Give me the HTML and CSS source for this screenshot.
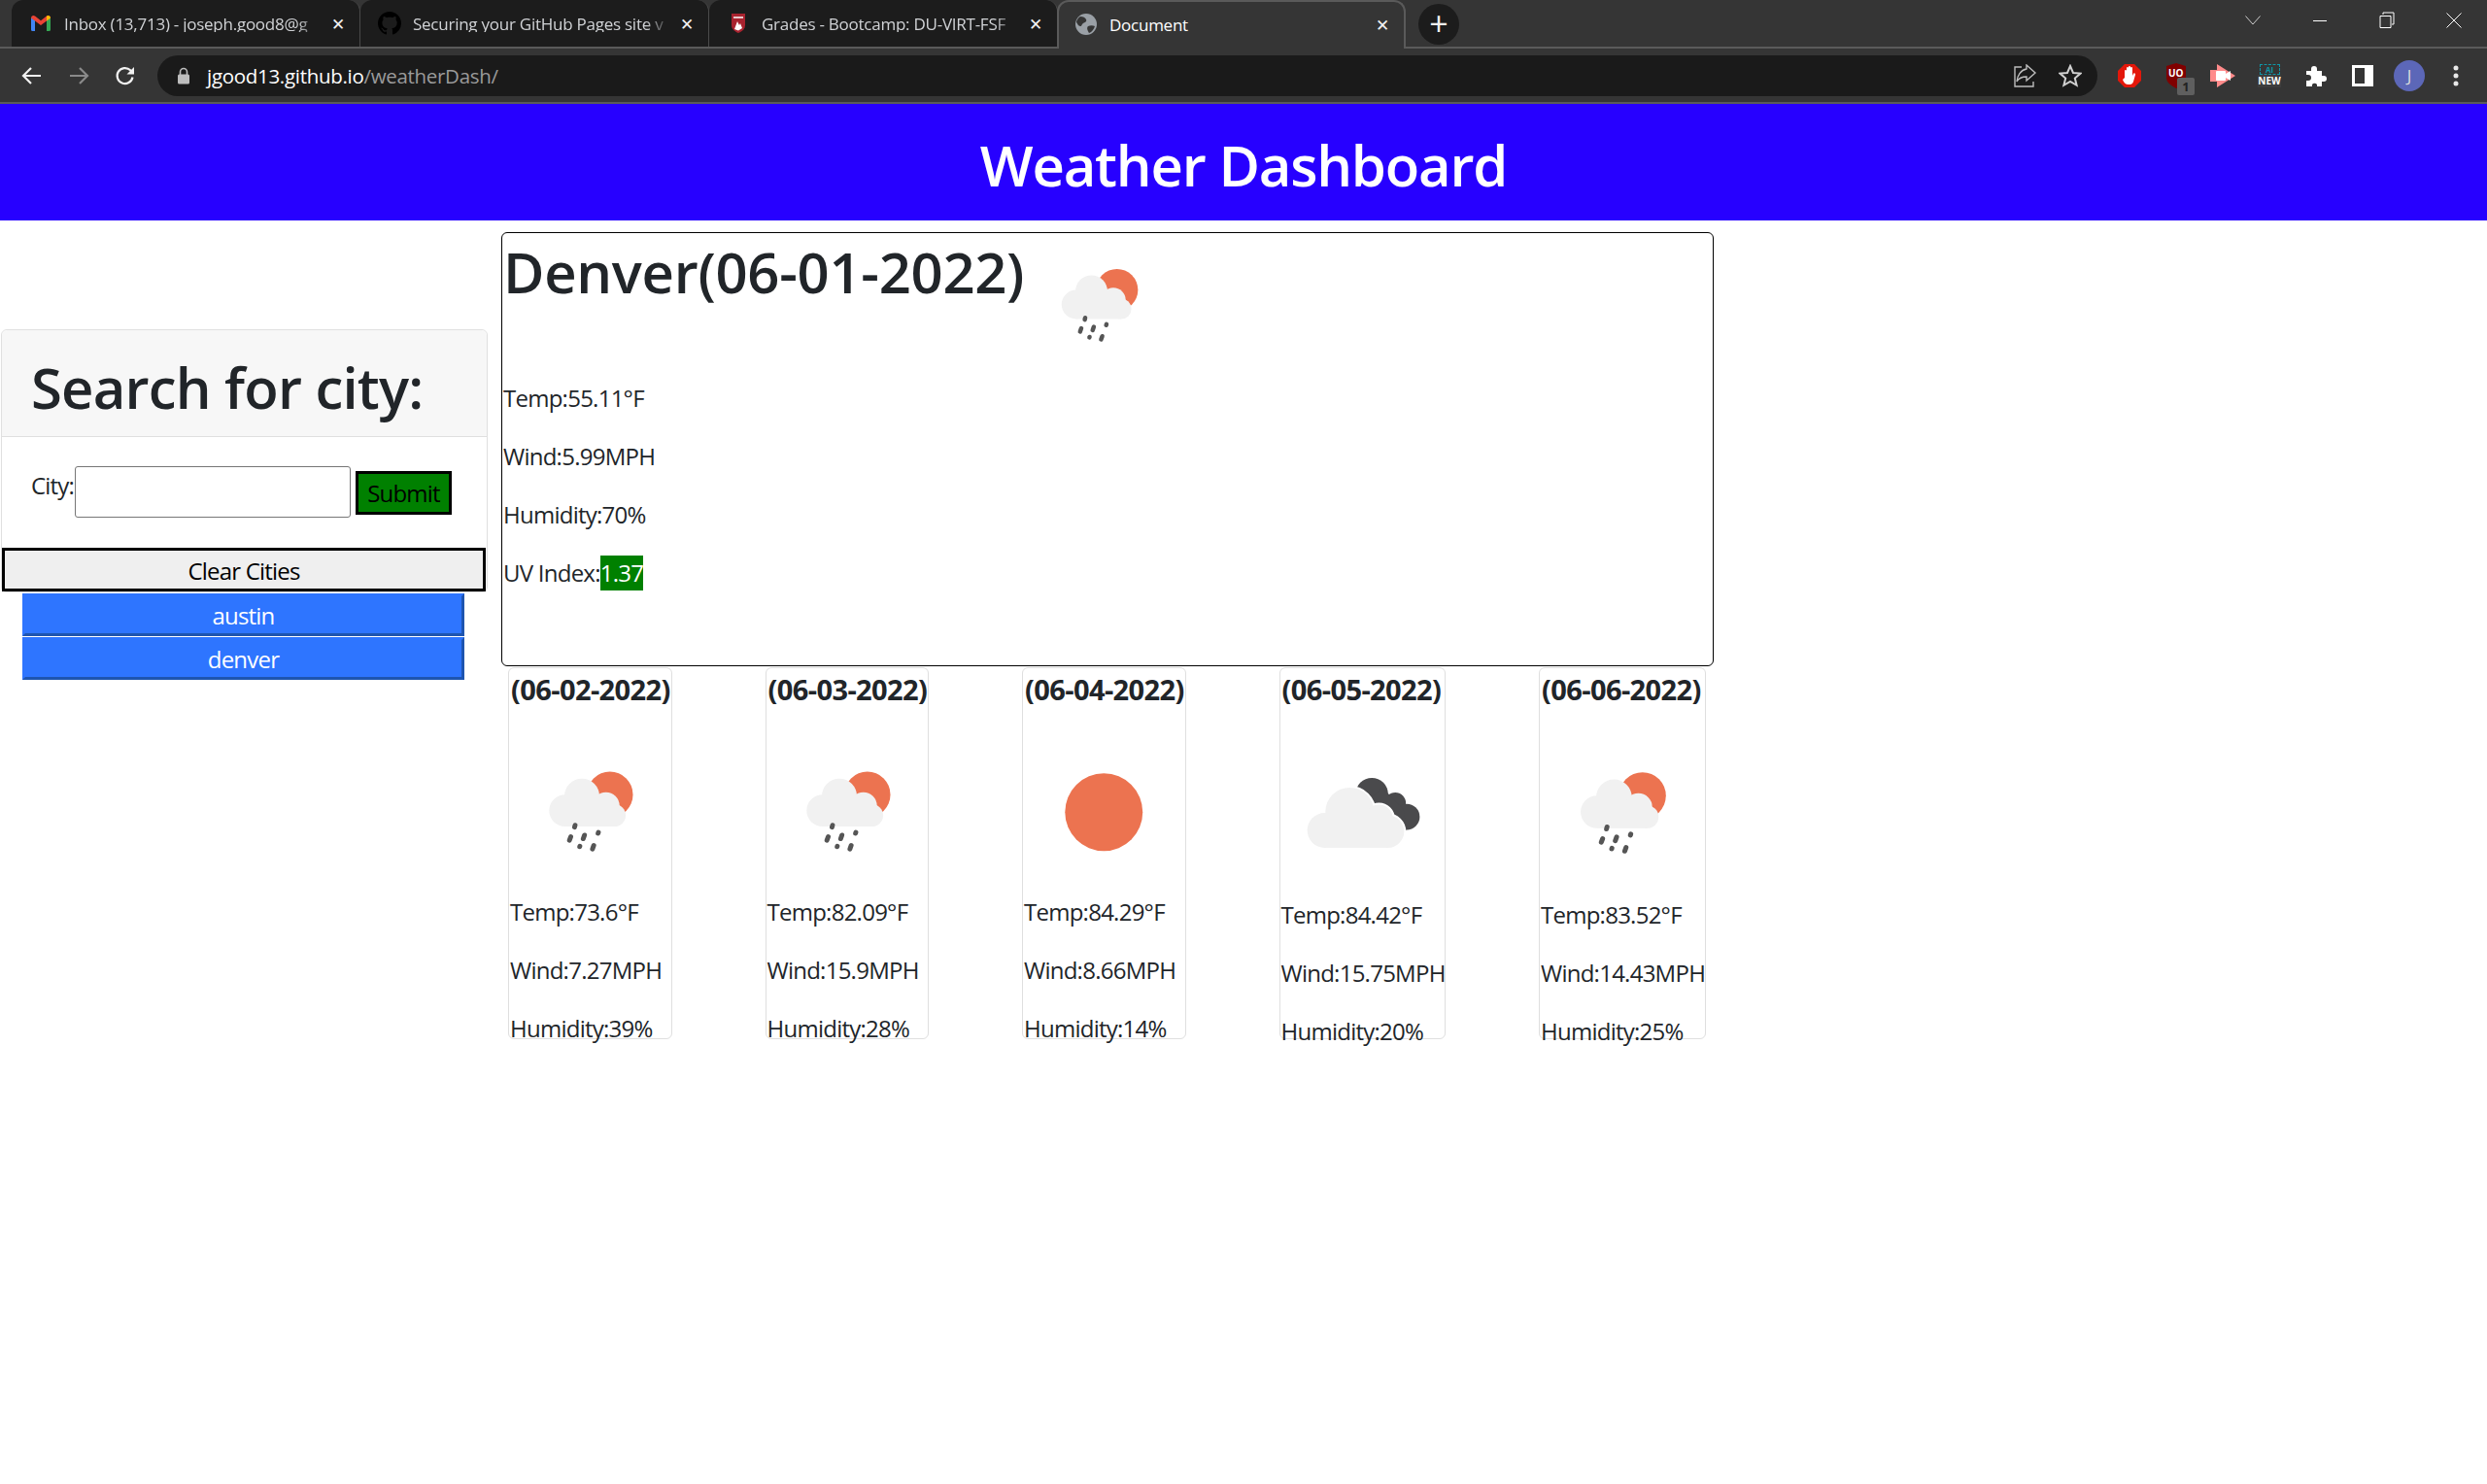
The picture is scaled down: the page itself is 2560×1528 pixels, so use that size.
FILE: index.html
```html
<!DOCTYPE html>
<html lang="en">
<head>
  <meta charset="UTF-8">
  <title>Document</title>
  <link rel="stylesheet" href="styles.css">
</head>
<body>
  <!-- Icon sprites -->
  <svg class="sprites" width="0" height="0">
    <symbol id="rain" viewBox="0 0 100 100">
      <circle cx="62.5" cy="39" r="14.4" fill="#ec7350"/>
      <g fill="#f1f1f1">
        <circle cx="34.5" cy="49" r="10"/>
        <circle cx="45" cy="40" r="11"/>
        <circle cx="60" cy="46" r="8.5"/>
        <circle cx="65.4" cy="52" r="7"/>
        <rect x="34.5" y="45" width="31" height="14"/>
      </g>
      <g stroke="#555" stroke-width="3" stroke-linecap="round">
        <path d="M40.700 58.200l-.3 1.200"/>
        <path d="M38 65.400l-.8 2.200"/>
        <path d="M46.600 64.400l-.8 2.200"/>
        <path d="M55.300 62.600l-.2.6"/>
        <path d="M43.700 71.300l-.1.3"/>
        <path d="M52.400 70.800l-.8 2.200"/>
      </g>
    </symbol>
    <symbol id="sun" viewBox="0 0 100 100">
      <circle cx="50" cy="50" r="24.300" fill="#ec7350"/>
    </symbol>
    <symbol id="clouds" viewBox="0 0 100 100">
      <g fill="#4a4a4c">
        <circle cx="55.600" cy="38" r="10"/>
        <circle cx="70" cy="43.500" r="6.500"/>
        <circle cx="77" cy="52" r="8"/>
        <path d="M50 45L62 34 75 47 77 60 65 58z"/>
      </g>
      <g fill="#f1f1f1" stroke="#fff" stroke-width="2.400">
        <circle cx="26.600" cy="60.300" r="10.700"/>
        <circle cx="42" cy="49" r="15"/>
        <circle cx="60" cy="53" r="8.500"/>
        <circle cx="65.400" cy="61" r="10"/>
      </g>
      <g fill="#f1f1f1">
        <circle cx="26.600" cy="60.300" r="10.700"/>
        <circle cx="42" cy="49" r="15"/>
        <circle cx="60" cy="53" r="8.500"/>
        <circle cx="65.400" cy="61" r="10"/>
        <rect x="26.600" y="50" width="39" height="21"/>
      </g>
    </symbol>
  </svg>

  <!-- Browser chrome -->
  <div class="browser">
    <div class="tabstrip">
      <div class="tab">
        <svg class="favicon" viewBox="0 0 24 24">
          <path d="M2 20V6l4 3v11H3.500A1.500 1.500 0 0 1 2 18.500z" fill="#4285f4"/>
          <path d="M22 20V6l-4 3v11h2.500a1.500 1.500 0 0 0 1.500-1.500z" fill="#34a853"/>
          <path d="M2 6.500C2 4 4.500 3.200 6 4.500l6 4.700 6-4.700c1.500-1.300 4-.5 4 2L18 9.500l-6 4.600-6-4.600z" fill="#ea4335"/>
          <path d="M18 4.500c1.500-1.300 4-.5 4 2L18 9.500z" fill="#fbbc04"/>
        </svg>
        <span class="tab-title">Inbox (13,713) - joseph.good8@g</span>
        <span class="tab-close">&#10005;</span>
      </div>
      <div class="tab">
        <svg class="favicon" viewBox="0 0 16 16">
          <path fill="#000" d="M8 0C3.580 0 0 3.580 0 8c0 3.540 2.290 6.530 5.470 7.590.4.070.55-.17.55-.38 0-.19-.01-.82-.01-1.490-2.010.37-2.530-.49-2.690-.94-.09-.23-.48-.94-.82-1.130-.28-.15-.68-.52-.01-.53.63-.01 1.080.58 1.230.82.720 1.210 1.870.87 2.330.66.070-.52.280-.87.510-1.070-1.780-.2-3.640-.89-3.640-3.950 0-.87.310-1.590.820-2.150-.080-.2-.360-1.020.080-2.120 0 0 .670-.210 2.200.820.640-.180 1.320-.270 2-.270s1.360.090 2 .270c1.530-1.040 2.200-.820 2.200-.820.440 1.100.160 1.920.080 2.120.510.560.820 1.270.820 2.150 0 3.070-1.870 3.750-3.650 3.950.290.250.540.730.540 1.480 0 1.070-.010 1.930-.010 2.200 0 .210.150.460.550.380A8.010 8.010 0 0 0 16 8c0-4.420-3.580-8-8-8z"/>
        </svg>
        <span class="tab-title">Securing your GitHub Pages site v</span>
        <span class="tab-close">&#10005;</span>
      </div>
      <div class="tab">
        <svg class="favicon" viewBox="0 0 24 24">
          <path d="M5 2h14v12c0 4-3.500 6.500-7 8-3.500-1.500-7-4-7-8z" fill="#a8232f"/>
          <path d="M7 5h10v2H7z" fill="#e8c9cc"/>
          <path d="M8 18l3-8 2 4 1-2 2 5-4 2.500z" fill="#fff"/>
        </svg>
        <span class="tab-title">Grades - Bootcamp: DU-VIRT-FSF</span>
        <span class="tab-close">&#10005;</span>
      </div>
      <div class="tab tab-active">
        <svg class="favicon" viewBox="0 0 24 24">
          <circle cx="12" cy="12" r="11" fill="#9aa0a6"/>
          <path d="M6 4c3 0 5 1 6 3s-1 3-3 4-1 3-3 3-3-3-4-4c0-2 2-5 4-6zM14 14c2-1 5-1 7 0-1 3-3 6-6 7-1-2-3-5-1-7z" fill="#353535"/>
        </svg>
        <span class="tab-title">Document</span>
        <span class="tab-close">&#10005;</span>
      </div>
      <div class="newtab">+</div>
      <div class="winctrls">
        <div class="winctrl">
          <svg width="16" height="10" viewBox="0 0 16 10"><path d="M.5.5L8 9 15.500.5" fill="none" stroke="#ccc"/></svg>
        </div>
        <div class="winctrl">
          <svg width="16" height="16" viewBox="0 0 16 16"><path d="M1 8.500h14" stroke="#fff" stroke-width="1"/></svg>
        </div>
        <div class="winctrl">
          <svg width="16" height="18" viewBox="0 0 16 18"><path d="M4 3V1h11v12h-2M1 4.500h11v12H1z" fill="none" stroke="#fff"/></svg>
        </div>
        <div class="winctrl">
          <svg width="16" height="16" viewBox="0 0 16 16"><path d="M.5.5l15 15M15.500.5l-15 15" stroke="#fff"/></svg>
        </div>
      </div>
    </div>

    <div class="toolbar">
      <div class="tool">
        <svg width="22" height="22" viewBox="0 0 22 22"><path d="M20 11H3M10 3l-8 8 8 8" fill="none" stroke="#f1f1f1" stroke-width="2.200"/></svg>
      </div>
      <div class="tool">
        <svg width="22" height="22" viewBox="0 0 22 22"><path d="M2 11h17M12 3l8 8-8 8" fill="none" stroke="#8a8a8a" stroke-width="2.200"/></svg>
      </div>
      <div class="tool">
        <svg width="22" height="22" viewBox="0 0 22 22"><path d="M18.500 12.500a8 8 0 1 1-2.300-7.200L19 8" fill="none" stroke="#f1f1f1" stroke-width="2.200"/><path d="M20 2v7.500h-7.500z" fill="#f1f1f1"/></svg>
      </div>
      <div class="omnibox">
        <svg class="lock" width="14" height="18" viewBox="0 0 14 18"><path d="M3.500 8V5a3.500 3.500 0 0 1 7 0v3" fill="none" stroke="#bdbdbd" stroke-width="1.600"/><rect x="1" y="7.500" width="12" height="10" rx="1.500" fill="#bdbdbd"/></svg>
        <span class="url"><span class="url-host">jgood13.github.io</span>/weatherDash/</span>
        <div class="tool omni-tool">
          <svg width="24" height="24" viewBox="0 0 24 24"><path d="M13 5V1l9 8-9 8v-4c-5 0-8 1.500-10 5 .5-6 4-12 10-13z" fill="none" stroke="#bdbdbd" stroke-width="1.400"/><path d="M8 3H1v20h19v-5" fill="none" stroke="#bdbdbd" stroke-width="1.400"/></svg>
        </div>
        <div class="tool omni-tool">
          <svg width="24" height="24" viewBox="0 0 24 24"><path d="M12 2l3 7 7.500.6-5.700 4.900 1.800 7.300L12 18l-6.600 3.800 1.800-7.300L1.500 9.600 9 9z" fill="none" stroke="#d0d0d0" stroke-width="2"/></svg>
        </div>
      </div>
      <div class="tool">
        <svg width="26" height="26" viewBox="0 0 26 26"><path d="M8 1h10l7 7v10l-7 7H8l-7-7V8z" fill="#e3170a"/><path d="M8 15V8a1 1 0 0 1 2 0v4-7a1 1 0 0 1 2 0v7-8a1 1 0 0 1 2 0v8-7a1 1 0 0 1 2 0v8l1-2a1 1 0 0 1 2 1l-2 7c-1 3-3 3-5 3-3 0-5-2-6-5z" fill="#fff"/></svg>
      </div>
      <div class="tool">
        <svg width="24" height="28" viewBox="0 0 24 28"><path d="M12 1l10 3v12c0 5-5 8-10 11C7 24 2 21 2 16V4z" fill="#800000"/></svg>
        <span class="ubo-text">UO</span>
        <span class="ext-badge">1</span>
      </div>
      <div class="tool">
        <svg width="26" height="24" viewBox="0 0 26 24"><path d="M7 0l19 12L7 24v-6H0V6h7z" fill="#ff8b8b"/><rect x="6" y="7" width="10" height="10" rx="1" fill="#fff"/><path d="M16 10l5-3v10l-5-3z" fill="#fff"/></svg>
      </div>
      <div class="tool">
        <div class="ai-new"><span class="ai-box">AI</span><span class="ai-label">NEW</span></div>
      </div>
      <div class="tool">
        <svg width="24" height="24" viewBox="0 0 24 24"><path d="M2 7h5V5a3 3 0 0 1 6 0v2h5v5h2a3 3 0 0 1 0 6h-2v5h-5v-2a3 3 0 0 0-5 0v2H2v-6h2a3 3 0 0 0 0-6H2z" fill="#fff"/></svg>
      </div>
      <div class="tool">
        <svg width="22" height="22" viewBox="0 0 22 22"><path d="M0 0h22v22H0z" fill="#fff"/><path d="M3 3h10v16H3z" fill="#353535"/></svg>
      </div>
      <div class="tool"><span class="avatar">J</span></div>
      <div class="tool">
        <svg width="6" height="24" viewBox="0 0 6 24"><circle cx="3" cy="4" r="2.500" fill="#e8e8e8"/><circle cx="3" cy="12" r="2.500" fill="#e8e8e8"/><circle cx="3" cy="20" r="2.500" fill="#e8e8e8"/></svg>
      </div>
    </div>
  </div>

  <!-- Page -->
  <header class="page-header">
    <h1>Weather Dashboard</h1>
  </header>

  <main class="content">
    <aside class="sidebar">
      <div class="search-card">
        <div class="search-head"><h1>Search for city:</h1></div>
        <form class="search-form">
          <label class="city-label">City:</label>
          <input class="city-input" type="text">
          <button class="submit-btn" type="button">Submit</button>
        </form>
        <button class="clear-btn" type="button">Clear Cities</button>
      </div>
      <button class="city-btn" type="button">austin</button>
      <button class="city-btn" type="button">denver</button>
    </aside>

    <section class="weather">
      <div class="today">
        <div class="today-head">
          <h1>Denver(06-01-2022)</h1>
          <svg class="today-icon"><use href="#rain"/></svg>
        </div>
        <p>Temp:55.11°F</p>
        <p>Wind:5.99MPH</p>
        <p>Humidity:70%</p>
        <p>UV Index:<span class="uv">1.37</span></p>
      </div>

      <div class="forecast">
        <div class="day day-narrow">
          <h5>(06-02-2022)</h5>
          <svg class="day-icon" viewBox="0 0 100 100"><use href="#rain"/></svg>
          <p>Temp:73.6°F</p>
          <p>Wind:7.27MPH</p>
          <p>Humidity:39%</p>
        </div>
        <div class="day day-narrow">
          <h5>(06-03-2022)</h5>
          <svg class="day-icon" viewBox="0 0 100 100"><use href="#rain"/></svg>
          <p>Temp:82.09°F</p>
          <p>Wind:15.9MPH</p>
          <p>Humidity:28%</p>
        </div>
        <div class="day day-narrow">
          <h5>(06-04-2022)</h5>
          <svg class="day-icon" viewBox="0 0 100 100"><use href="#sun"/></svg>
          <p>Temp:84.29°F</p>
          <p>Wind:8.66MPH</p>
          <p>Humidity:14%</p>
        </div>
        <div class="day day-wide">
          <h5>(06-05-2022)</h5>
          <svg class="day-icon" viewBox="0 0 100 100"><use href="#clouds"/></svg>
          <p>Temp:84.42°F</p>
          <p>Wind:15.75MPH</p>
          <p>Humidity:20%</p>
        </div>
        <div class="day day-wide">
          <h5>(06-06-2022)</h5>
          <svg class="day-icon" viewBox="0 0 100 100"><use href="#rain"/></svg>
          <p>Temp:83.52°F</p>
          <p>Wind:14.43MPH</p>
          <p>Humidity:25%</p>
        </div>
      </div>
    </section>
  </main>
</body>
</html>
```
FILE: styles.css
```css
/* General Styles */
html, body {
  margin: 0;
  padding: 0;
  background-color: #fff;
  color: #212529;
  font-family: "Open Sans", "Noto Sans", sans-serif;
  font-size: 24px;
  line-height: 36px;
}

html {
  overflow: hidden;
}

body {
  min-height: 100vh;
}

* {
  box-sizing: border-box;
}

.sprites {
  position: absolute;
}

p, h1, h5 {
  margin: 0;
}

/* Browser chrome */
.browser {
  height: 107px;
  background-color: #353535;
  border-bottom: 2px solid #5a5a5a;
  color: #e8eaed;
  line-height: 1;
}

.tabstrip {
  display: flex;
  align-items: flex-start;
  height: 50px;
  padding-left: 12px;
  border-bottom: 2px solid #5a5a5a;
}

.tab {
  display: flex;
  align-items: center;
  width: 359px;
  height: 48px;
  padding: 0 12px 0 18px;
  background-color: #1c1c1c;
  border-right: 1px solid #4a4a4a;
  border-radius: 12px 12px 0 0;
}

.tab-active {
  height: 50px;
  margin-left: -1px;
  padding: 0 12px 2px 16px;
  background-color: #353535;
  border: 2px solid #5a5a5a;
  border-bottom: none;
}

.favicon {
  flex: none;
  width: 24px;
  height: 24px;
  margin-right: 12px;
}

.tab-title {
  flex: 1;
  margin-right: 6px;
  overflow: hidden;
  white-space: nowrap;
  font-size: 17px;
  letter-spacing: -0.25px;
  color: #d0d2d5;
  -webkit-mask-image: linear-gradient(to right, #000 90%, transparent 100%);
  mask-image: linear-gradient(to right, #000 90%, transparent 100%);
}

.tab-active .tab-title {
  color: #fff;
  -webkit-mask-image: none;
  mask-image: none;
}

.tab-close {
  flex: none;
  width: 20px;
  text-align: center;
  font-size: 17px;
  color: #f1f1f1;
}

.newtab {
  flex: none;
  width: 42px;
  height: 42px;
  margin: 4px 0 0 13px;
  border-radius: 50%;
  background-color: #1c1c1c;
  color: #f1f1f1;
  font-size: 34px;
  line-height: 40px;
  text-align: center;
}

.winctrls {
  display: flex;
  margin-left: auto;
}

.winctrl {
  display: flex;
  align-items: center;
  justify-content: center;
  width: 69px;
  height: 42px;
}

.toolbar {
  display: flex;
  align-items: center;
  height: 55px;
  padding: 0 8px 0 9px;
}

.tool {
  position: relative;
  display: flex;
  flex: none;
  align-items: center;
  justify-content: center;
  width: 48px;
  height: 42px;
}

.omni-tool {
  width: 46px;
}

.omnibox {
  display: flex;
  flex: 1;
  align-items: center;
  height: 42px;
  margin-left: 9px;
  margin-right: 9px;
  padding: 0 5px 0 20px;
  background-color: #1a1a1a;
  border-radius: 21px;
}

.lock {
  flex: none;
  margin-right: 17px;
}

.url {
  flex: 1;
  padding-top: 1px;
  font-size: 20.5px;
  letter-spacing: -0.3px;
  color: #9a9a9a;
}

.url-host {
  color: #fff;
}

.ubo-text {
  position: absolute;
  top: 13px;
  left: 16px;
  color: #fff;
  font-size: 10px;
  font-weight: 700;
}

.ext-badge {
  position: absolute;
  left: 25px;
  top: 23px;
  width: 18px;
  height: 18px;
  border-radius: 2px;
  background-color: #5f5f5f;
  color: #222;
  font-size: 13px;
  font-weight: 700;
  line-height: 18px;
  text-align: center;
}

.ai-new {
  display: flex;
  flex-direction: column;
  align-items: center;
  width: 24px;
}

.ai-box {
  width: 21px;
  height: 11px;
  border: 1px dashed #0e97a8;
  color: #0e97a8;
  font-size: 8px;
  font-weight: 700;
  line-height: 9px;
  text-align: center;
}

.ai-label {
  color: #fff;
  background-color: #3d3d3d;
  font-size: 10px;
  font-weight: 700;
  line-height: 13px;
}

.avatar {
  width: 32px;
  height: 32px;
  border-radius: 50%;
  background-color: #5c67b8;
  color: #ddd;
  font-size: 17px;
  line-height: 32px;
  text-align: center;
}

/* Page header */
.page-header {
  height: 120px;
  padding-top: 27px;
  background-color: #2700ff;
  color: #fff;
  text-align: center;
}

.page-header h1 {
  font-size: 58px;
  font-weight: 600;
  line-height: 72px;
  letter-spacing: -1.2px;
}

/* Content */
.content {
  display: flex;
  padding-left: 1px;
  gap: 14px;
}

.sidebar {
  flex: none;
  width: 501px;
  margin-top: 112px;
}

.search-card {
  border: 1px solid #e0e0e0;
  border-radius: 6px;
  height: 271px;
}

.search-head {
  height: 110px;
  padding: 23px 30px 0;
  background-color: #f7f7f7;
  border-bottom: 1px solid #dfdfdf;
  border-radius: 6px 6px 0 0;
}

.search-head h1 {
  font-size: 58px;
  font-weight: 600;
  line-height: 72px;
  letter-spacing: -0.8px;
}

.search-form {
  display: flex;
  align-items: flex-start;
  height: 114px;
  padding: 30px 0 0 30px;
}

.city-label {
  flex: none;
  width: 45px;
  margin-top: 2px;
  letter-spacing: -0.8px;
}

.city-input {
  flex: none;
  width: 284px;
  height: 53px;
  border: 1px solid #767676;
  border-radius: 3px;
  background-color: #fff;
}

.submit-btn {
  flex: none;
  width: 99px;
  height: 45px;
  margin: 5px 0 0 5px;
  padding: 0;
  background-color: #008000;
  border: 3px solid #000;
  color: #000;
  font: inherit;
  line-height: 39px;
  letter-spacing: -0.8px;
}

.clear-btn {
  display: block;
  width: 498px;
  height: 45px;
  padding: 1px 0 0;
  background-color: #efefef;
  border: 3px solid #000;
  color: #000;
  font: inherit;
  line-height: 39px;
  letter-spacing: -0.8px;
}

.city-btn {
  display: block;
  width: 455px;
  height: 44px;
  margin: 1px 0 0 22px;
  padding: 2px 0 0;
  background-color: #2e75ff;
  border: 3px solid;
  border-color: #2e75ff #1e55b0 #1e55b0 #2e75ff;
  color: #fff;
  font: inherit;
  line-height: 36px;
  letter-spacing: -0.8px;
}

/* Weather */
.weather {
  flex: none;
  width: 1248px;
  margin-top: 12px;
}

.today {
  height: 447px;
  padding-left: 1px;
  border: 1px solid #000;
  border-radius: 6px;
}

.today p, .day p {
  height: 36px;
  margin-bottom: 24px;
  white-space: nowrap;
  letter-spacing: -0.75px;
}

.today-head {
  display: flex;
  align-items: flex-start;
  height: 152px;
}

.today-head h1 {
  width: 538px;
  margin-top: 4px;
  font-size: 58px;
  font-weight: 600;
  line-height: 72px;
  letter-spacing: -0.3px;
  white-space: nowrap;
}

.today-icon {
  width: 150px;
  height: 150px;
}

.uv {
  display: inline-block;
  background-color: #008000;
  color: #fff;
}

.forecast {
  display: flex;
  gap: 96px;
  padding: 1px 0 0 7px;
}

.day {
  height: 383px;
  padding: 0 1px;
  border: 1px solid #dfdfdf;
  border-radius: 6px;
}

.day-narrow {
  width: 168.5px;
}

.day-wide {
  width: 171.5px;
}

.day h5 {
  height: 66px;
  padding-left: 1px;
  font-size: 29px;
  font-weight: 700;
  line-height: 44px;
  letter-spacing: -0.6px;
  white-space: nowrap;
}

.day-icon {
  display: block;
  width: 100%;
  aspect-ratio: 1;
  margin-bottom: 2px;
}
```
